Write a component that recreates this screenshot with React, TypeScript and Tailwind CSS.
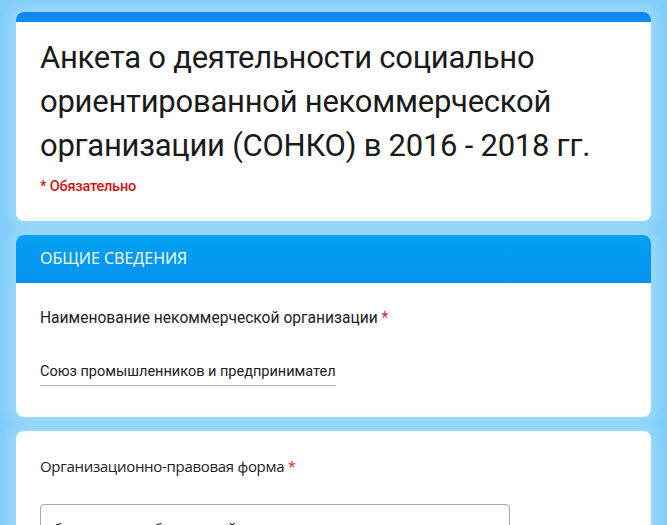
import React from 'react';

const App: React.FC = () => {
  return (
    <div className="min-h-[525px] h-[525px] overflow-hidden bg-[#80cdf8] px-4 pt-3">
      <div className="flex flex-col gap-[14px]">

        {/* Title card */}
        <div className="rounded-lg bg-white shadow-[0_0_12px_6px_rgba(160,220,252,0.9)] overflow-hidden">
          <div className="h-[10px] bg-gradient-to-b from-[#0b86f0] to-[#0d8ef2]" />
          <div className="px-6 pt-[14px] pb-6">
            <h1 className="text-[31px] leading-[44px] text-[#1a1a1a] font-['Roboto',sans-serif] tracking-[-0.25px]">
              Анкета о деятельности социально ориентированной некоммерческой организации (СОНКО) в 2016 - 2018 гг.
            </h1>
            <p className="mt-[9px] text-[14.5px] leading-5 font-medium text-[#cc1414] font-['Roboto',sans-serif] tracking-[-0.2px]">
              * Обязательно
            </p>
          </div>
        </div>

        {/* Section card */}
        <div className="rounded-lg bg-white shadow-[0_0_12px_6px_rgba(160,220,252,0.9)] overflow-hidden">
          <div className="h-12 flex items-center pb-[2px] px-6 bg-gradient-to-b from-[#03a2f4] to-[#0591ee]">
            <span className="text-white text-[16px] font-['Open_Sans',sans-serif]">ОБЩИЕ СВЕДЕНИЯ</span>
          </div>
          <div className="px-6 pt-[24px] pb-[31px]">
            <div className="text-[15.6px] leading-[22px] text-[#202124] font-['Roboto',sans-serif]">
              Наименование некоммерческой организации <span className="text-[#d93025]">*</span>
            </div>
            <div className="mt-[33px] w-[296px] border-b border-[#b5b5b5] pb-[3px] overflow-hidden whitespace-nowrap text-[14.5px] leading-[20px] text-[#202124] font-['Roboto',sans-serif]">
              Союз промышленников и предпринимателей
            </div>
          </div>
        </div>

        {/* Question card */}
        <div className="rounded-lg bg-white shadow-[0_0_12px_6px_rgba(160,220,252,0.9)] overflow-hidden h-[120px]">
          <div className="px-6 pt-[24px]">
            <div className="text-[15px] leading-[22px] text-[#202124] font-['Open_Sans',sans-serif] tracking-[-0.3px]">
              Организационно-правовая форма <span className="text-[#d93025]">*</span>
            </div>
            <div className="mt-[27px] w-[470px] h-12 rounded border border-[#a8a8ac] pl-[5px] pt-[14px] text-[14px] leading-5 text-[#202124] font-['Open_Sans',sans-serif] tracking-[-0.4px]">
              объединение работодателей
            </div>
          </div>
        </div>
      </div>
    </div>
  );
};

export default App;
